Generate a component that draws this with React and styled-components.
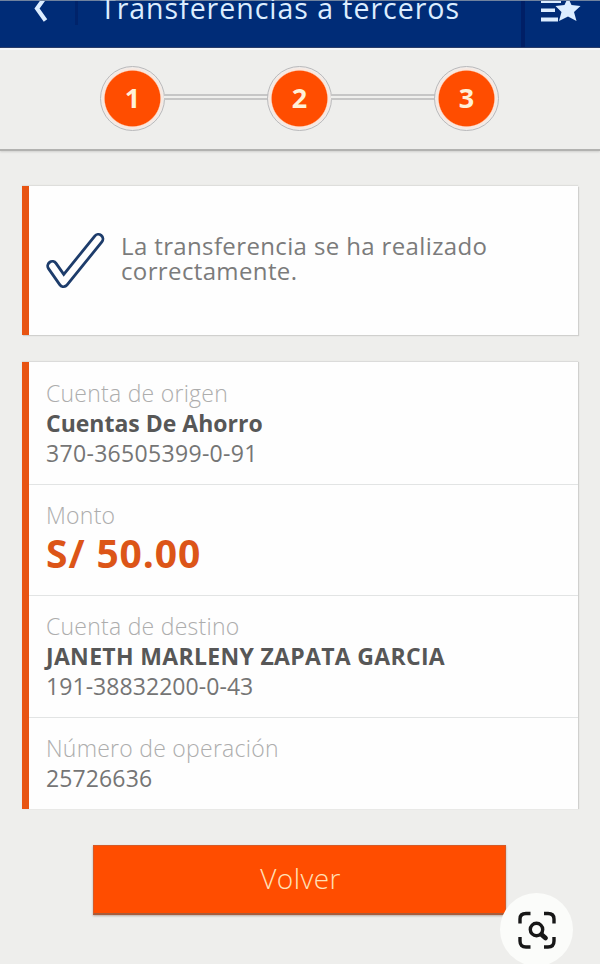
import React from 'react';
import styled, { createGlobalStyle } from 'styled-components';

const GlobalStyle = createGlobalStyle`
    * {
        box-sizing: border-box;
    }
    body {
        margin: 0;
        background: #eeeeec;
        font-family: 'Open Sans', 'Noto Sans', sans-serif;
        overflow: hidden;
    }
`;

const Page = styled.div`
    position: relative;
    display: flex;
    flex-direction: column;
    width: 600px;
    height: 964px;
    overflow: hidden;
    background: #eeeeec;
`;

const Header = styled.header`
    display: flex;
    flex: none;
    height: 48px;
    border-top: 1px solid #70839f;
    border-bottom: 1px solid #1d3262;
    background: #002c77;
    color: #dcedff;
`;

const BackButton = styled.div`
    width: 78px;
    height: 24px;
    padding-left: 33px;
    border-right: 3px solid #00236a;
    svg {
        display: block;
    }
`;

const HeaderTitle = styled.h1`
    flex: 1;
    margin: -11px 0 0;
    padding-left: 22px;
    font-size: 28.5px;
    font-weight: 400;
    line-height: 36px;
    letter-spacing: 0.97px;
    white-space: nowrap;
`;

const FavoriteButton = styled.div`
    width: 79px;
    padding-left: 16px;
    border-left: 4px solid #001f66;
    svg {
        display: block;
    }
`;

const Stepper = styled.div`
    display: flex;
    flex: none;
    align-items: center;
    justify-content: center;
    height: 103px;
    padding: 0 1px 2px 0;
    border-top: 2px solid #f3f6fa;
    border-bottom: 2px solid #b2b2b0;
    box-shadow: 0 1px 2px #cfcfcd;
`;

const Step = styled.div`
    display: flex;
    align-items: center;
    justify-content: center;
    width: 65px;
    height: 65px;
    padding-bottom: 1px;
    border: 1px solid #b9b9bb;
    border-radius: 50%;
    background: radial-gradient(circle, #ff4d00 27.3px, #fbe5da 28.5px, #f1ece9 31px);
    color: #fff1d8;
    font-size: 27px;
    font-weight: 700;
    line-height: 30px;
`;

const StepLine = styled.div`
    width: 104px;
    height: 6px;
    margin: -3px -1px 0;
    border-top: 2px solid #c6c6c6;
    border-bottom: 2px solid #c6c6c6;
    background: #efefed;
`;

const Card = styled.section`
    flex: none;
    width: 556px;
    margin-left: 22px;
    border-left: 7px solid #e85412;
    background: #fefefe;
    box-shadow: 1px 0 1px #d0d0ce, 0 -1px 1px #dededc;
`;

const MessageCard = styled(Card)`
    display: flex;
    align-items: center;
    height: 149px;
    margin-top: 35px;
    padding: 0 0 4px 16px;
    box-shadow: 1px 1px 1px #d0d0ce, 0 -1px 1px #dededc;
`;

const Message = styled.p`
    margin: -2px 0 0 14px;
    color: #7b7b7b;
    font-size: 24px;
    line-height: 25px;
    letter-spacing: 0.37px;
    white-space: nowrap;
`;

const DetailCard = styled(Card)`
    height: 447px;
    margin-top: 27px;
`;

const Row = styled.div`
    height: ${({ $height }) => $height}px;
    padding: 15px 0 0 17px;
    border-bottom: 1px solid #e2e4e4;
    &:first-child {
        padding-top: 16px;
    }
    &:last-child {
        border-bottom: none;
    }
`;

const Line = styled.div`
    font-size: 23px;
    line-height: 30px;
    letter-spacing: ${({ $spacing }) => $spacing || 0}px;
    white-space: nowrap;
`;

const Label = styled(Line)`
    color: #adadad;
    font-weight: 300;
    letter-spacing: 0.25px;
`;

const Name = styled(Line)`
    color: #575757;
    font-weight: 700;
`;

const Value = styled(Line)`
    color: #757575;
`;

const Amount = styled.div`
    color: #dc5518;
    font-size: 39px;
    font-weight: 700;
    line-height: 46px;
    letter-spacing: 0.9px;
`;

const BackAction = styled.button`
    flex: none;
    width: 413px;
    height: 70px;
    margin: 36px 0 0 93px;
    padding: 0 0 3px 2px;
    border: 1px solid #d55a27;
    border-bottom: 2px solid #a65c3c;
    background: #ff4d00;
    box-shadow: 0 1px 2px #b8aaa3;
    color: #ffe0b8;
    font-family: inherit;
    font-size: 28px;
    font-weight: 300;
    line-height: 36px;
    letter-spacing: 0.4px;
`;

const LensButton = styled.div`
    position: absolute;
    left: 500px;
    top: 893px;
    display: flex;
    align-items: center;
    justify-content: center;
    width: 73px;
    height: 73px;
    border-radius: 50%;
    background: #fbfcfa;
`;

const ChevronIcon = () => (
    <svg width="16" height="24" viewBox="0 0 16 24" fill="none">
        <path d="M13 -5L4 7.5L12.5 19.5" stroke="currentColor" strokeWidth="4.2" />
    </svg>
);

const FavoritesIcon = () => (
    <svg width="42" height="24" viewBox="0 0 42 24" fill="currentColor">
        <path d="M0 0H20V2H0zM0 7.5H14V11H0zM0 16.5H17V20.5H0z" />
        <path d="M27 -3.5L30.5 4L39.5 5L33 11L35.5 20L27 15.5L18 20L20.5 11L14.5 5L23.5 4Z" />
    </svg>
);

const CheckIcon = () => (
    <svg width="62" height="60" viewBox="0 0 62 60" fill="none" strokeLinejoin="round" strokeLinecap="round">
        <path d="M7.3 37L18.5 53L53.3 10" stroke="#1d3c6b" strokeWidth="12" />
        <path d="M7.3 37L18.5 53L53.3 10" stroke="#fefefe" strokeWidth="6.4" />
    </svg>
);

const LensIcon = () => (
    <svg width="38" height="38" viewBox="0 0 38 38" fill="none" stroke="#171717" strokeWidth="3.4">
        <path d="M2 12.5V8Q2 2.5 8 2.5H12.5M26 2.5H30Q36 2.5 36 8V12.5M36 26V30Q36 36 30 36H26M12.5 36H8Q2 36 2 30V26" />
        <circle cx="18.5" cy="18.5" r="6.2" />
        <path d="M23.5 23.5L27.5 27" strokeWidth="4.8" strokeLinecap="round" />
    </svg>
);

const App = () => {
    return (
        <>
            <GlobalStyle />
            <Page>
                <Header>
                    <BackButton>
                        <ChevronIcon />
                    </BackButton>
                    <HeaderTitle>Transferencias a terceros</HeaderTitle>
                    <FavoriteButton>
                        <FavoritesIcon />
                    </FavoriteButton>
                </Header>
                <Stepper>
                    <Step>1</Step>
                    <StepLine />
                    <Step>2</Step>
                    <StepLine />
                    <Step>3</Step>
                </Stepper>
                <MessageCard>
                    <CheckIcon />
                    <Message>
                        La transferencia se ha realizado
                        <br />
                        correctamente.
                    </Message>
                </MessageCard>
                <DetailCard>
                    <Row $height={123}>
                        <Label>Cuenta de origen</Label>
                        <Name>Cuentas De Ahorro</Name>
                        <Value $spacing={0.32}>370-36505399-0-91</Value>
                    </Row>
                    <Row $height={111}>
                        <Label>Monto</Label>
                        <Amount>S/ 50.00</Amount>
                    </Row>
                    <Row $height={122}>
                        <Label>Cuenta de destino</Label>
                        <Name $spacing={0.32}>JANETH MARLENY ZAPATA GARCIA</Name>
                        <Value $spacing={0.06}>191-38832200-0-43</Value>
                    </Row>
                    <Row $height={91}>
                        <Label>Número de operación</Label>
                        <Value $spacing={0.12}>25726636</Value>
                    </Row>
                </DetailCard>
                <BackAction>Volver</BackAction>
                <LensButton>
                    <LensIcon />
                </LensButton>
            </Page>
        </>
    );
};

export default App;
